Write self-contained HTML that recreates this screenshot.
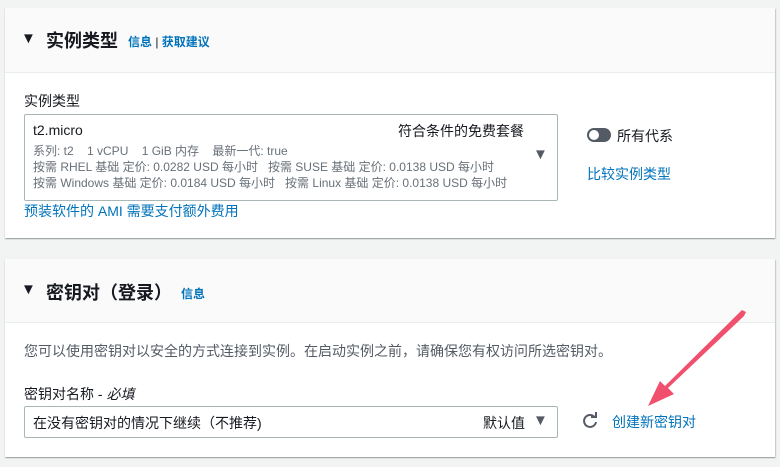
<!DOCTYPE html>
<html><head><meta charset="utf-8"><style>
body{margin:0;width:780px;height:467px;background:#f2f3f3;position:relative;overflow:hidden;font-family:"Liberation Sans","Noto Sans CJK SC",sans-serif;color:#16191f}
.card{position:absolute;left:5px;width:770px;background:#fff;box-shadow:0 1px 1px rgba(0,28,36,.3),1px 1px 1px rgba(0,28,36,.15);}
.hd{background:#fafafa;border-bottom:1px solid #eaeded;position:relative}
.a{position:absolute;white-space:nowrap}
.link{color:#0073bb}
.tri{font-size:15px}
.sel{position:absolute;border:1px solid #aab7b8;border-radius:2px;background:#fff}
.g{color:#687078;font-size:12px}
</style></head><body>
<div class="card" style="top:8px;height:230px">
 <div class="hd" style="height:64px">
  <div class="a tri" style="left:16px;top:22px">▼</div>
  <div class="a" style="left:41px;top:19px;font-size:18px;font-weight:bold">实例类型</div>
  <div class="a link" style="left:123px;top:25px;font-size:12px;font-weight:bold">信息 <span style="color:#16191f;font-weight:normal">|</span> 获取建议</div>
 </div>
 <div class="a" style="left:19px;top:83px;font-size:14px">实例类型</div>
 <div class="sel" style="left:19px;top:106px;width:532px;height:85px">
  <div class="a" style="left:8px;top:7px;font-size:14px">t2.micro</div>
  <div class="a" style="left:373px;top:6px;font-size:14px">符合条件的免费套餐</div>
  <div class="a g" style="left:8px;top:27px">系列: t2 &nbsp;&nbsp; 1 vCPU &nbsp;&nbsp; 1 GiB 内存 &nbsp;&nbsp; 最新一代: true</div>
  <div class="a g" style="left:8px;top:43px">按需 RHEL 基础 定价: 0.0282 USD 每小时 &nbsp; 按需 SUSE 基础 定价: 0.0138 USD 每小时</div>
  <div class="a g" style="left:8px;top:59px">按需 Windows 基础 定价: 0.0184 USD 每小时 &nbsp; 按需 Linux 基础 定价: 0.0138 USD 每小时</div>
  <div class="a" style="left:508px;top:31px;font-size:15px;color:#545b64">▼</div>
 </div>
 <div class="a link" style="left:19px;top:193px;font-size:14px">预装软件的 AMI 需要支付额外费用</div>
 <div class="a" style="left:582px;top:120px;width:24px;height:14px;border-radius:7px;background:#545b64"><div style="position:absolute;left:2px;top:2px;width:10px;height:10px;border-radius:5px;background:#fff"></div></div>
 <div class="a" style="left:612px;top:118px;font-size:14px">所有代系</div>
 <div class="a link" style="left:582px;top:156px;font-size:14px">比较实例类型</div>
</div>
<div class="card" style="top:259px;height:198px">
 <div class="hd" style="height:63px">
  <div class="a tri" style="left:16px;top:22px">▼</div>
  <div class="a" style="left:41px;top:20px;font-size:18px;font-weight:bold">密钥对（登录）</div>
  <div class="a link" style="left:176px;top:26px;font-size:12px;font-weight:bold">信息</div>
 </div>
 <div class="a" style="left:19px;top:82px;font-size:14px;color:#545b64">您可以使用密钥对以安全的方式连接到实例。在启动实例之前，请确保您有权访问所选密钥对。</div>
 <div class="a" style="left:19px;top:125px;font-size:14px">密钥对名称 - <i>必填</i></div>
 <div class="sel" style="left:19px;top:147px;width:532px;height:30px">
  <div class="a" style="left:8px;top:6px;font-size:14px">在没有密钥对的情况下继续（不推荐)</div>
  <div class="a" style="left:458px;top:6px;font-size:14px">默认值</div>
  <div class="a" style="left:508px;top:5px;font-size:15px;color:#545b64">▼</div>
 </div>
 <svg class="a" style="left:576px;top:153px" width="18" height="18" viewBox="0 0 18 18"><path d="M14 5.5A6 6 0 1 0 15 10" fill="none" stroke="#545b64" stroke-width="2"/><path d="M10 5h5V0" fill="none" stroke="#545b64" stroke-width="2"/></svg>
 <div class="a link" style="left:607px;top:153px;font-size:14px">创建新密钥对</div>
</div>
<svg class="a" style="left:0;top:0" width="780" height="467"><path d="M746 312 L744 316 L668 388 L674 394 L648 406 L660 381 L665 386 L742 310Z" fill="#f0506e"/></svg>
</body></html>
